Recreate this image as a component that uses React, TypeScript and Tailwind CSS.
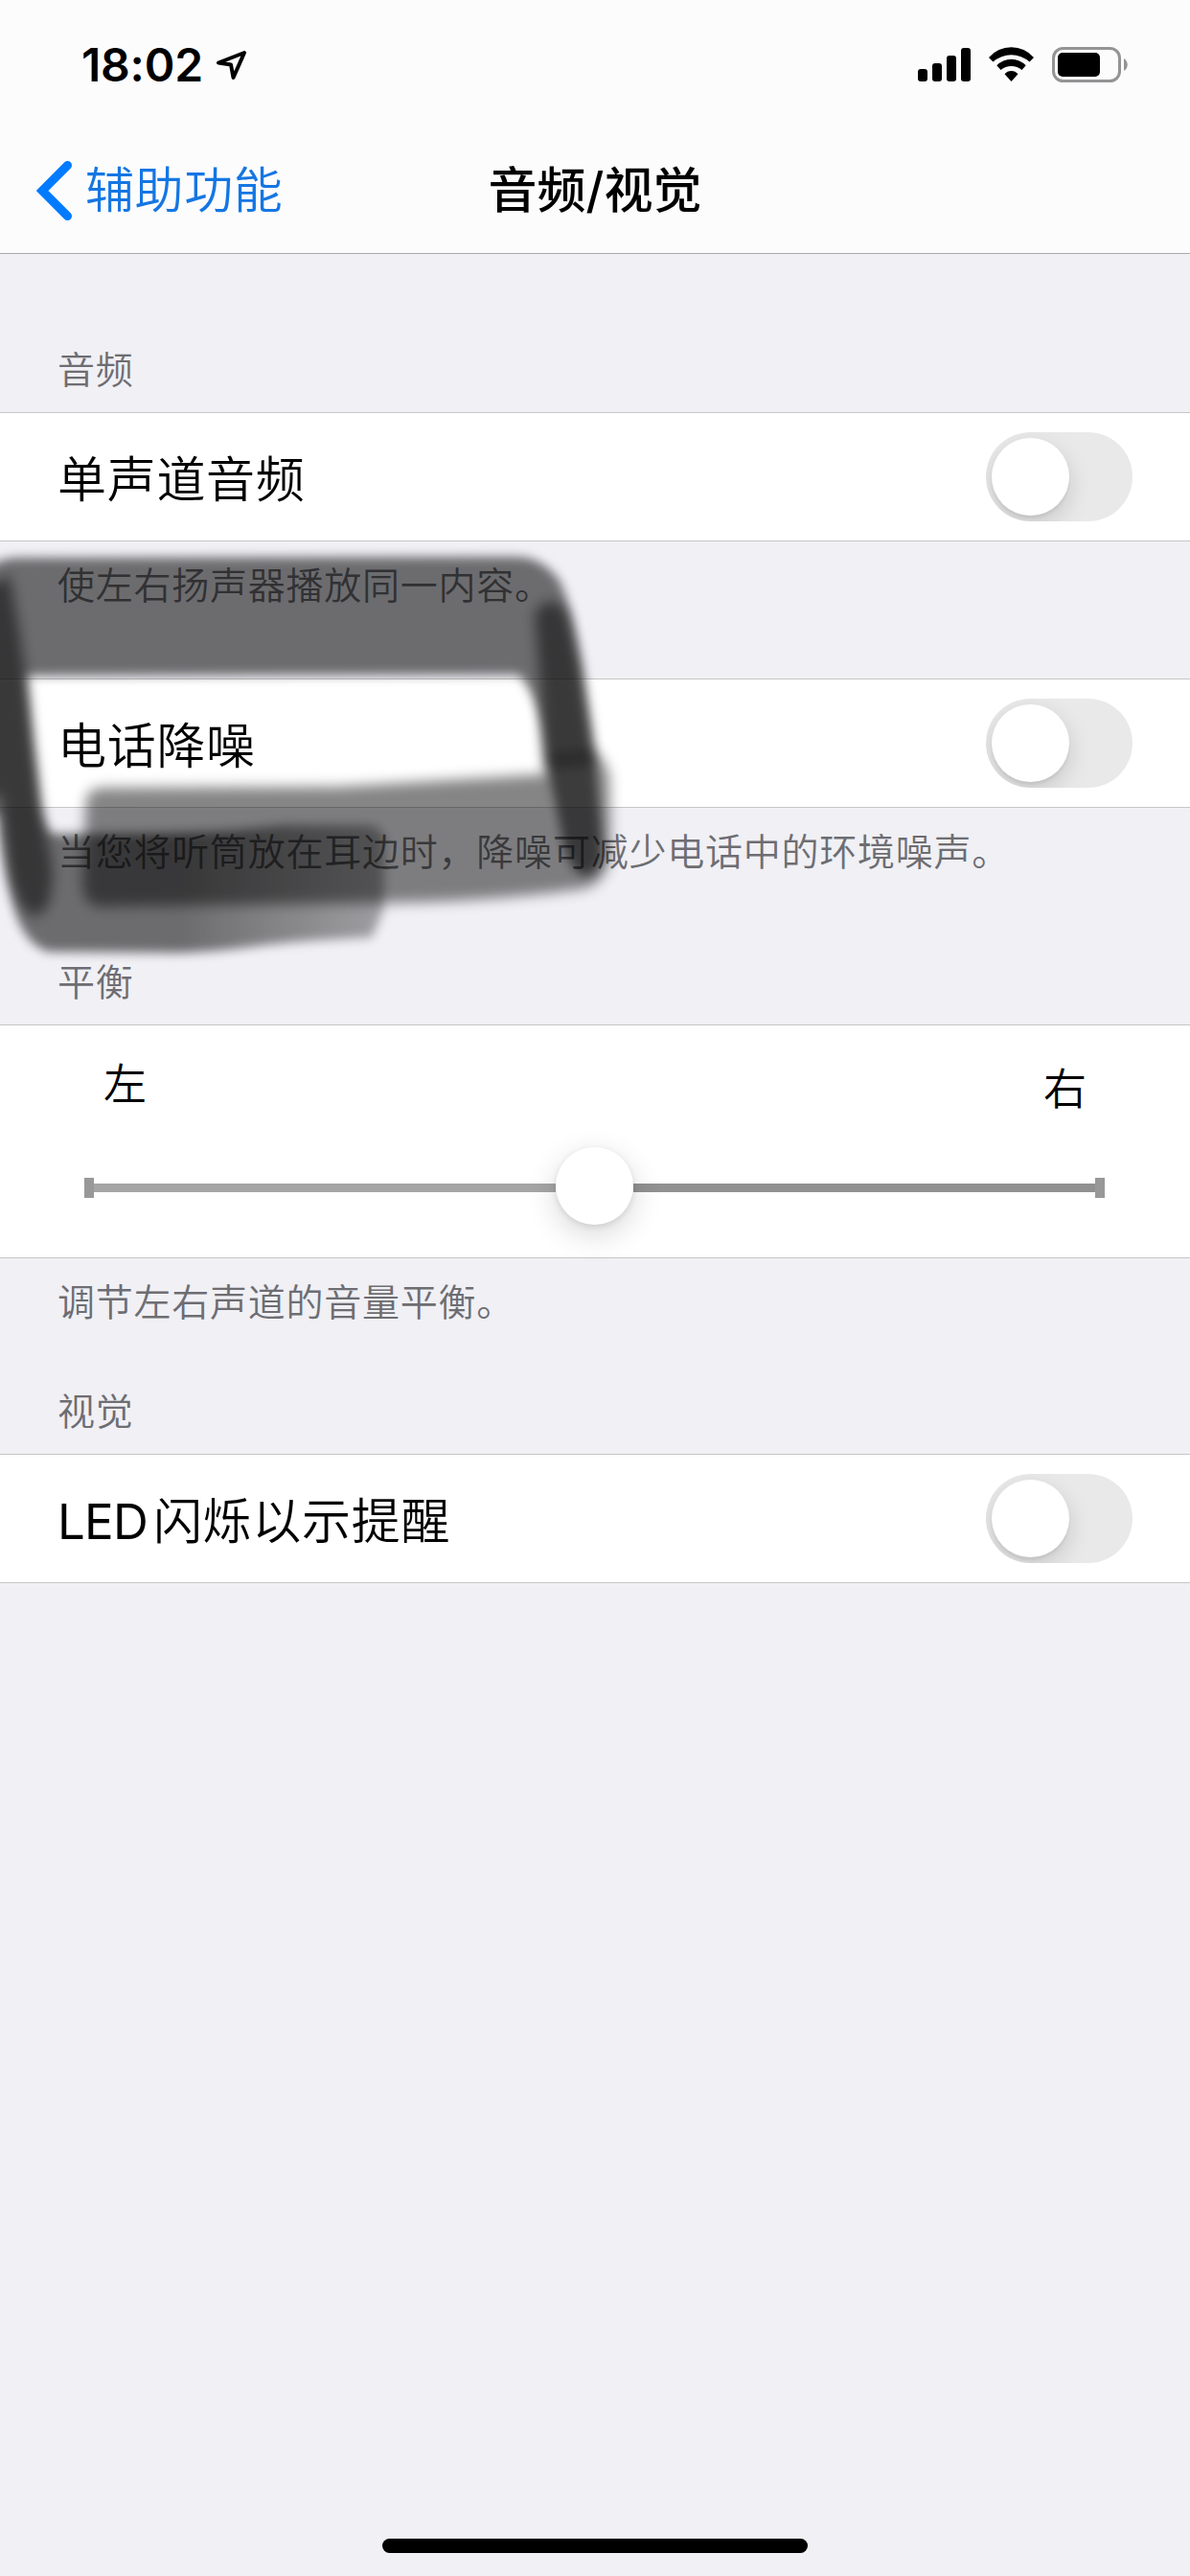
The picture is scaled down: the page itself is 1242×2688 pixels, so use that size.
import { useState, type ReactNode } from "react";

function StatusBar() {
  return (
    <div className="flex h-[132px] items-start justify-between pl-[85px] pr-[64px] pt-[48px]">
      <div className="flex items-start">
        <span className="block w-[139px] text-[48px] font-semibold leading-[40px] tracking-[-0.2px] text-black">18:02</span>
        <svg className="mt-[2px]" width="38" height="36" viewBox="0 0 38 36" fill="none">
          <path d="M31 5 L4 15.5 L17 17.5 L19.5 31 Z" stroke="#000" strokeWidth="4" strokeLinejoin="round" />
        </svg>
      </div>

      <div className="flex items-start">
        {/* signal */}
        <svg className="mt-[2px]" width="55" height="36" viewBox="0 0 55 36">
          <rect x="0" y="22" width="10" height="13" rx="3" />
          <rect x="15" y="16" width="10" height="19" rx="3" />
          <rect x="30" y="8" width="10" height="27" rx="3" />
          <rect x="45" y="0" width="10" height="35" rx="3" />
        </svg>
        {/* wifi */}
        <svg className="ml-[19px] mt-[1px]" width="48" height="37" viewBox="0 0 48 37">
          <path d="M0 11 A31 31 0 0 1 47 11 L42.5 15.5 A28.7 28.7 0 0 0 4.5 15.5 Z" />
          <path d="M8.3 19.3 A20.8 20.8 0 0 1 38.7 19.3 L34.5 24 A17.1 17.1 0 0 0 12.5 24 Z" />
          <path d="M16.5 28.3 A9 9 0 0 1 30.5 28.3 L23.5 36 Z" />
        </svg>
        {/* battery */}
        <svg className="ml-[18px] mt-[1px]" width="80" height="38" viewBox="0 0 80 38">
          <rect x="1.5" y="1.5" width="69" height="34" rx="10" fill="none" stroke="#949496" strokeWidth="3" />
          <rect x="6" y="6" width="44" height="25" rx="5" />
          <path d="M75 12 C80 15 80 22 75 25 Z" fill="#949496" />
        </svg>
      </div>
    </div>
  );
}

function NavBar() {
  return (
    <div className="grid h-[134px] grid-cols-3 items-center">
      <button type="button" className="flex items-center pl-[38px] text-left">
        <svg width="40" height="64" viewBox="0 0 40 64" fill="none">
          <path d="M32.5 5.5 L6 32 L32.5 58.5" stroke="#007aff" strokeWidth="9" strokeLinecap="round" strokeLinejoin="miter" />
        </svg>
        <span className="ml-[11px] whitespace-nowrap text-[51px] font-[350] leading-[60px] tracking-[0.6px] text-[#1576e3]">辅助功能</span>
      </button>
      <h1 className="text-center text-[51px] font-medium leading-[60px] text-black">音频/视觉</h1>
      <div />
    </div>
  );
}

function Toggle() {
  const [on, setOn] = useState(false);
  return (
    <button
      type="button"
      role="switch"
      aria-checked={on}
      onClick={() => setOn(!on)}
      className={`flex h-[93px] w-[153px] items-center overflow-hidden rounded-full px-[6px] ${
        on ? "justify-end bg-[#34c759]" : "justify-start bg-[#e9e9ea]"
      }`}
    >
      <span className="size-[81px] rounded-full bg-white shadow-[0_9px_24px_rgba(0,0,0,0.15),0_3px_3px_rgba(0,0,0,0.06)]" />
    </button>
  );
}

function ToggleRow({ label }: { label: ReactNode }) {
  return (
    <div className="flex h-[135px] items-center justify-between border-y border-[#c6c6c8] bg-white pl-[60px] pr-[60px]">
      <span className="pt-[7px] text-[51px] font-[350] leading-[60px] tracking-[0.7px] text-black">{label}</span>
      <Toggle />
    </div>
  );
}

function Note({ children }: { children: string }) {
  return <p className="px-[60px] text-[39px] font-[350] leading-[48px] tracking-[0.76px] text-[#6d6d72]">{children}</p>;
}

function BalanceSlider() {
  return (
    <div className="h-[244px] border-y border-[#c6c6c8] bg-white pl-[88px] pr-[89px]">
      <div className="flex justify-between pl-[20px] pr-[19px] pt-[35px] text-[45px] font-[350] leading-[54px] text-black">
        <span>左</span>
        <span className="mt-[5px]">右</span>
      </div>
      <div className="mt-[35px] flex h-[81px] items-center">
        <div className="h-[21px] w-[10px] bg-[#989898]" />
        <div className="h-[9px] flex-1 bg-[#a5a5a5]" />
        <div className="z-10 mt-[-4px] size-[81px] rounded-full bg-white shadow-[0_10px_32px_rgba(0,0,0,0.16),0_2px_6px_rgba(0,0,0,0.10)]" />
        <div className="h-[9px] flex-1 bg-[#919191]" />
        <div className="h-[21px] w-[10px] bg-[#989898]" />
      </div>
    </div>
  );
}

// Marker strokes over the phone noise cancellation row
function MarkerStrokes() {
  return (
    <svg className="pointer-events-none absolute left-0 top-0" width="680" height="1040" viewBox="0 0 680 1040">
      <defs>
        <filter id="soft" x="-10%" y="-10%" width="120%" height="120%">
          <feGaussianBlur stdDeviation="5.5" />
        </filter>
        <filter id="softer" x="-30%" y="-10%" width="160%" height="120%">
          <feGaussianBlur stdDeviation="7" />
        </filter>
        <linearGradient id="tail" gradientUnits="userSpaceOnUse" x1="190" y1="0" x2="410" y2="0">
          <stop offset="0" stopColor="#000" stopOpacity="0" />
          <stop offset="1" stopColor="#000" stopOpacity="0.4" />
        </linearGradient>
        <mask id="fade" maskUnits="userSpaceOnUse" x="-40" y="540" width="720" height="500">
          <rect x="-40" y="540" width="720" height="500" fill="#fff" />
          <rect x="190" y="840" width="250" height="180" fill="url(#tail)" />
        </mask>
      </defs>
      <g mask="url(#fade)">
        <path
          filter="url(#soft)"
          fillOpacity="0.55"
          d="M-20 600 Q-6 582 20 582 L540 581 Q568 582 585 608 Q598 640 606 690 L620 785 L628 880 Q630 910 612 914 Q596 912 588 880 L568 780 Q562 725 541 704 L27 705 L34 773 L42 840 Q46 868 56 870 L168 869 Q240 868 295 861 L380 861 Q402 862 402 880 L400 950 L388 978 Q300 982 262 988 Q210 995 170 994 L50 993 Q24 984 14 945 Q2 900 -2 850 L-30 850 Z"
        />
      </g>
      <path
        filter="url(#softer)"
        fillOpacity="0.48"
        d="M90 834 Q92 822 110 822 L353 821 L568 808 L574 790 L622 785 Q636 800 636 815 L637 890 Q634 920 610 927 Q520 940 412 942 L100 946 Q86 940 86 920 Z"
      />
      <path
        filter="url(#softer)"
        fillOpacity="0.5"
        d="M-30 620 L10 600 L19 650 L27 705 L34 773 L42 840 L54 900 Q58 952 36 956 Q18 950 10 910 L0 830 L-30 830 Z"
      />
      <path filter="url(#softer)" fillOpacity="0.5" d="M558 640 Q575 615 592 640 L606 700 L621 794 L568 800 L564 720 Z" />
    </svg>
  );
}

export default function App() {
  return (
    <div className="relative flex h-[2688px] w-[1242px] flex-col overflow-hidden bg-[#f0f0f5] font-['Inter','Noto_Sans_CJK_SC',sans-serif]">
      <header className="h-[265px] border-b border-[#a9a9ac] bg-[#fcfcfd]">
        <StatusBar />
        <NavBar />
      </header>

      <main className="flex-1">
        <div className="flex h-[165px] flex-col justify-end pb-[20px]">
          <Note>音频</Note>
        </div>
        <ToggleRow label="单声道音频" />
        <div className="h-[143px] pt-[22px]">
          <Note>使左右扬声器播放同一内容。</Note>
        </div>
        <ToggleRow label="电话降噪" />
        <div className="flex h-[226px] flex-col justify-between pb-[20px] pt-[22px]">
          <Note>当您将听筒放在耳边时，降噪可减少电话中的环境噪声。</Note>
          <Note>平衡</Note>
        </div>
        <BalanceSlider />
        <div className="flex h-[204px] flex-col justify-between pb-[20px] pt-[22px]">
          <Note>调节左右声道的音量平衡。</Note>
          <Note>视觉</Note>
        </div>
        <ToggleRow
          label={
            <>
              <span className="mr-[6px] font-normal tracking-[-0.8px]">LED</span>闪烁以示提醒
            </>
          }
        />
      </main>

      <div className="mb-[24px] h-[15px] w-[444px] self-center rounded-full bg-black" />
      <MarkerStrokes />
    </div>
  );
}
